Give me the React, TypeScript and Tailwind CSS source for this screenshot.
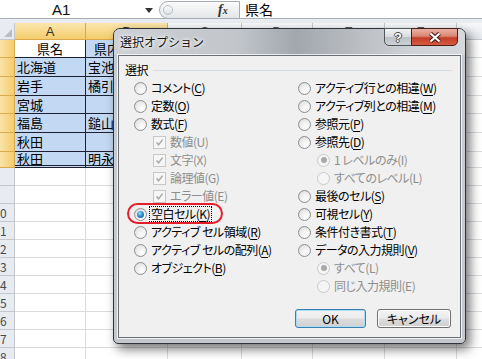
import type { ReactNode } from 'react';

type Opt = {
  label: string;
  k: string;
  kind?: 'radio' | 'check';
  sub?: boolean;
  disabled?: boolean;
  checked?: boolean;
  focus?: boolean;
};

const LEFT: Opt[] = [
  { label: 'コメント', k: 'C' },
  { label: '定数', k: 'O' },
  { label: '数式', k: 'F' },
  { label: '数値', k: 'U', kind: 'check', sub: true, disabled: true, checked: true },
  { label: '文字', k: 'X', kind: 'check', sub: true, disabled: true, checked: true },
  { label: '論理値', k: 'G', kind: 'check', sub: true, disabled: true, checked: true },
  { label: 'エラー値', k: 'E', kind: 'check', sub: true, disabled: true, checked: true },
  { label: '空白セル', k: 'K', checked: true, focus: true },
  { label: 'アクティブ セル領域', k: 'R' },
  { label: 'アクティブ セルの配列', k: 'A' },
  { label: 'オブジェクト', k: 'B' },
];

const RIGHT: Opt[] = [
  { label: 'アクティブ行との相違', k: 'W' },
  { label: 'アクティブ列との相違', k: 'M' },
  { label: '参照元', k: 'P' },
  { label: '参照先', k: 'D' },
  { label: '1 レベルのみ', k: 'I', sub: true, disabled: true, checked: true },
  { label: 'すべてのレベル', k: 'L', sub: true, disabled: true },
  { label: '最後のセル', k: 'S' },
  { label: '可視セル', k: 'Y' },
  { label: '条件付き書式', k: 'T' },
  { label: 'データの入力規則', k: 'V' },
  { label: 'すべて', k: 'L', sub: true, disabled: true, checked: true },
  { label: '同じ入力規則', k: 'E', sub: true, disabled: true },
];

// G sits mostly off screen, its letter never shows
const COLS = [
  { name: 'A', w: 'w-[71px]', sel: true },
  { name: 'B', w: 'w-[82px]', sel: true },
  { name: 'C', w: 'w-[74px]' },
  { name: 'D', w: 'w-[71px]' },
  { name: 'E', w: 'w-[72px]' },
  { name: 'F', w: 'w-[72px]' },
  { name: '', w: 'w-[72px]' },
];

// rows 1-7 are a little uneven in the shot, the rest are 18px
const ROW_H = [
  'h-[18px]', 'h-[19px]', 'h-[19px]', 'h-[18px]', 'h-[19px]', 'h-[19px]', 'h-[16px]',
  'h-[18px]', 'h-[18px]', 'h-[18px]', 'h-[18px]', 'h-[18px]', 'h-[18px]',
  'h-[18px]', 'h-[18px]', 'h-[18px]', 'h-[18px]', 'h-[18px]', 'h-[18px]',
];

const DATA = [
  ['県名', '県内の地名'],
  ['北海道', '宝池'],
  ['岩手', '橘引'],
  ['宮城', ''],
  ['福島', '鎚山'],
  ['秋田', ''],
  ['秋田', '明永'],
];

function Radio({ checked, disabled }: { checked?: boolean; disabled?: boolean }) {
  return (
    <span
      className={`w-[13px] h-[13px] shrink-0 rounded-full border flex items-center justify-center ${
        disabled
          ? 'border-[#cacaca] bg-[#f5f5f5]'
          : 'border-[#8c8e90] bg-[radial-gradient(circle_at_65%_70%,#ffffff_0%,#ececec_55%,#d2d2d2_100%)]'
      }`}
    >
      {checked && (
        <span
          className={
            disabled
              ? 'w-[6px] h-[6px] rounded-full bg-[#a9a9a9]'
              : 'w-[7px] h-[7px] rounded-full bg-[radial-gradient(circle_at_40%_35%,#a6e1fb_0%,#2a8ed0_45%,#0c4d7e_100%)]'
          }
        />
      )}
    </span>
  );
}

function Check() {
  return (
    <span className="w-[13px] h-[13px] shrink-0 border border-[#c8c8c8] bg-[#f6f6f6] flex items-center justify-center">
      <svg width="9" height="9" viewBox="0 0 9 9">
        <path d="M1.5 4.5 L3.6 6.8 L7.6 1.6" fill="none" stroke="#aaaaaa" strokeWidth="1.5" />
      </svg>
    </span>
  );
}

function Option({ o }: { o: Opt }) {
  const text: ReactNode = (
    <>
      {o.label}(
      {o.disabled ? o.k : <span className="underline underline-offset-[2px]">{o.k}</span>})
    </>
  );
  return (
    <div className={`h-[18px] flex items-center gap-[4px] ${o.sub ? 'pl-[19px]' : ''}`}>
      {o.kind === 'check' ? <Check /> : <Radio checked={o.checked} disabled={o.disabled} />}
      {o.focus ? (
        <span className="-ml-[2px] px-[1px] leading-[14px] border border-dotted border-black whitespace-nowrap">
          {text}
        </span>
      ) : (
        <span className={`whitespace-nowrap ${o.disabled ? 'text-[#8e8e8e]' : 'text-black'}`}>{text}</span>
      )}
    </div>
  );
}

function SheetRow({ i }: { i: number }) {
  const n = i + 1;
  const inTable = i < 7;
  return (
    <div className={`flex ${ROW_H[i]}`}>
      <div
        className={`w-[15px] shrink-0 border-r border-b flex items-center text-[12px] leading-none ${
          inTable
            ? 'bg-[linear-gradient(90deg,#f9e3a8,#f3cc6e)] border-[#d9ab4c]'
            : 'bg-[#e8ebef] border-[#c4c8ce] text-[#4a4a4a]'
        }`}
      >
        {n >= 10 ? String(n % 10) : ''}
      </div>
      {COLS.map((c, j) => {
        if (inTable && j < 2) {
          const active = i === 0 && j === 0;
          return (
            <div
              key={j}
              className={`${c.w} shrink-0 whitespace-nowrap border-r border-[#1d2030] ${
                i === 6 ? 'border-b-[3px] border-double leading-[13px]' : 'border-b leading-[17px]'
              } ${active ? 'bg-white' : 'bg-[#c3d9f3]'} ${i === 0 ? 'text-center' : 'pl-[2px]'} text-[13px]`}
            >
              {DATA[i][j]}
            </div>
          );
        }
        return <div key={j} className={`${c.w} shrink-0 border-r border-b border-[#d9dbdd] bg-white`} />;
      })}
    </div>
  );
}

export default function App() {
  return (
    <div className="relative w-[482px] h-[359px] overflow-hidden bg-white text-black [font-family:'Noto_Sans_CJK_JP',sans-serif]">
      {/* formula bar */}
      <div className="h-[19px] flex border-b border-[#a9afb7] bg-white">
        <div className="w-[159px] shrink-0 relative">
          <span className="absolute left-[52px] top-[1px] text-[15px] leading-[17px] [font-family:'Liberation_Sans',sans-serif] text-[#111]">
            A1
          </span>
          <svg className="absolute left-[145px] top-[8px]" width="8" height="5" viewBox="0 0 8 5">
            <path d="M0 0 H8 L4 5 Z" fill="#333" />
          </svg>
        </div>
        <div className="w-[81px] shrink-0 h-[18px] mt-[1px] rounded-l-[9px] border border-[#a5abb3] bg-[linear-gradient(180deg,#fbfbfb,#e3e5e8)] flex items-center relative">
          <span className="ml-[3px] w-[10px] h-[10px] rounded-full border border-[#b9bec4] bg-[linear-gradient(180deg,#ffffff,#dcdfe3)]" />
          <span className="absolute left-[58px] top-[0px] text-[14px] leading-[16px] italic font-bold [font-family:'Liberation_Serif',serif] text-[#333]">
            f<span className="text-[10px]">x</span>
          </span>
        </div>
        <div className="flex-1 pl-[5px] text-[14px] leading-[18px]">県名</div>
      </div>
      <div className="h-[4px] bg-[#e9ecf0]" />

      {/* sheet */}
      <div className="flex h-[17px]">
        <div className="w-[15px] shrink-0 border-r border-b border-[#c4c8ce] bg-[#e8ebef] relative">
          <svg className="absolute right-[2px] bottom-[2px]" width="8" height="8" viewBox="0 0 8 8">
            <path d="M8 0 V8 H0 Z" fill="#b9bec5" />
          </svg>
        </div>
        {COLS.map((c, j) => (
          <div
            key={j}
            className={`${c.w} shrink-0 border-r border-b text-center text-[13px] pt-[2px] leading-[14px] [font-family:'Liberation_Sans',sans-serif] ${
              c.sel
                ? 'bg-[linear-gradient(180deg,#fbe6ae,#f4cd6c)] border-[#dca94a] text-[#333]'
                : 'bg-[linear-gradient(180deg,#f7f8fa,#e4e7eb)] border-[#c4c8ce] text-[#555]'
            }`}
          >
            {c.name}
          </div>
        ))}
      </div>
      {ROW_H.map((_, i) => (
        <SheetRow key={i} i={i} />
      ))}

      {/* dialog */}
      <div className="absolute left-[113px] top-[28px] w-[353px] h-[316px] rounded-t-[7px] rounded-b-[5px] border border-[#2f343a] bg-[linear-gradient(180deg,#c3c8cd_0%,#c9cdd1_20%,#c4c8cc_100%)] shadow-[4px_5px_11px_rgba(0,0,0,0.55)] flex flex-col">
        <div className="h-[26px] shrink-0 rounded-t-[6px] flex items-center pl-[6px] bg-[linear-gradient(90deg,#cdd1d5_0%,#c2c6cb_35%,#a2a7ad_52%,#b4b8bd_65%,#cfd2d6_85%,#d6d9dc_100%)]">
          <span className="text-[12px] text-[#111] [text-shadow:0_0_5px_#ffffff,0_0_3px_#ffffff]">選択オプション</span>
        </div>
        <div className="absolute -top-[1px] right-[7px] flex h-[18px]">
          <div className="w-[28px] h-[18px] rounded-bl-[5px] border border-[#50565c] bg-[linear-gradient(180deg,#f1f2f4_0%,#d9dcdf_48%,#bcc1c6_52%,#cdd1d5_100%)] flex items-center justify-center">
            <span className="text-[13px] font-bold leading-none text-white [font-family:'Liberation_Sans',sans-serif] [text-shadow:1px_0_#474c52,-1px_0_#474c52,0_1px_#474c52,0_-1px_#474c52]">
              ?
            </span>
          </div>
          <div className="w-[47px] h-[18px] -ml-[1px] rounded-br-[5px] border border-[#4a1f18] bg-[linear-gradient(180deg,#e9b0a4_0%,#d98773_45%,#c53d27_55%,#d65a40_100%)] flex items-center justify-center">
            <svg width="14" height="11" viewBox="0 0 14 11">
              <path d="M2.5 1.5 L11.5 9.5 M11.5 1.5 L2.5 9.5" stroke="#3f1a13" strokeWidth="4.2" />
              <path d="M2.5 1.5 L11.5 9.5 M11.5 1.5 L2.5 9.5" stroke="#ffffff" strokeWidth="2.2" />
            </svg>
          </div>
        </div>

        <div className="mx-[4px] mb-[5px] flex-1 border border-[#6b7076] bg-[#f0f0f0] shadow-[0_0_0_1px_rgba(255,255,255,0.75)] pt-[5px] text-[12px] leading-[16px] tracking-[-0.5px] [font-feature-settings:'palt']">
          <div className="h-[18px] flex items-center gap-[5px] pl-[6px] pr-[8px]">
            <span>選択</span>
            <div className="flex-1 border-t border-[#d5dde3]" />
          </div>
          <div className="flex pl-[15px]">
            <div className="w-[164px] shrink-0 flex flex-col">
              {LEFT.map((o) => (
                <Option key={o.label} o={o} />
              ))}
            </div>
            <div className="flex flex-col">
              {RIGHT.map((o) => (
                <Option key={o.label} o={o} />
              ))}
            </div>
          </div>
          <div className="mt-[14px] flex justify-end gap-[11px] pr-[9px] tracking-normal">
            <button className="w-[71px] h-[19px] rounded-[3px] border border-[#3c7fb1] bg-[linear-gradient(180deg,#f3f3f3_0%,#ebebeb_48%,#dcdcdc_52%,#d0d0d0_100%)] shadow-[inset_0_0_0_1px_#a8dcf6] text-[12px] leading-none">
              OK
            </button>
            <button className="w-[74px] h-[19px] rounded-[3px] border border-[#707070] bg-[linear-gradient(180deg,#f3f3f3_0%,#ebebeb_48%,#dcdcdc_52%,#d0d0d0_100%)] shadow-[inset_0_0_0_1px_#fcfcfc] text-[12px] leading-none">
              キャンセル
            </button>
          </div>
        </div>
      </div>

      {/* red annotation round the chosen option */}
      <div className="absolute left-[127px] top-[203px] w-[96px] h-[21px] rounded-[11px] border-2 border-[#e3202a]" />
    </div>
  );
}
